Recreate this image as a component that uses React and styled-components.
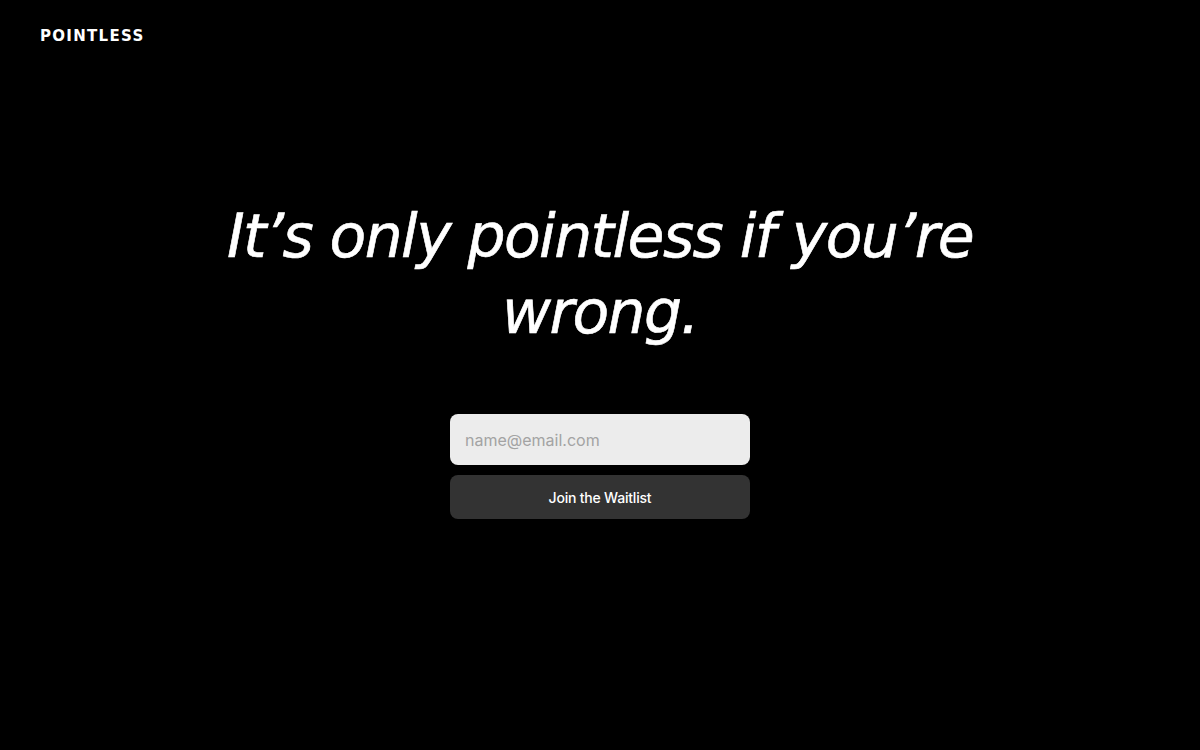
import React from 'react';
import styled, { createGlobalStyle } from 'styled-components';

const Global = createGlobalStyle`
  html, body {
    margin: 0;
    padding: 0;
    background: #000;
  }
  * { box-sizing: border-box; }
`;

const Page = styled.div`
  width: 1200px;
  height: 750px;
  background: #000;
  color: #fff;
  display: flex;
  flex-direction: column;
`;

const Header = styled.header`
  padding: 27px 40px 0;
  height: 60px;
`;

const Logo = styled.div`
  font-family: "DejaVu Sans", sans-serif;
  font-weight: 700;
  font-size: 15px;
  letter-spacing: 1.3px;
  line-height: 18px;
`;

const Main = styled.main`
  display: flex;
  flex-direction: column;
  align-items: center;
  padding-top: 138px;
`;

const Headline = styled.h1`
  margin: 0;
  width: 800px;
  text-align: center;
  font-family: "DejaVu Sans", sans-serif;
  font-style: italic;
  font-weight: 500;
  font-size: 60px;
  line-height: 76px;
  letter-spacing: -1.6px;
  -webkit-text-stroke: 0.6px #fff;
`;

const Form = styled.form`
  margin-top: 64px;
  width: 300px;
  display: flex;
  flex-direction: column;
  gap: 10px;
`;

const EmailInput = styled.input`
  height: 51px;
  border: none;
  border-radius: 8px;
  background: #ececec;
  padding: 0 15px;
  font-family: Inter, sans-serif;
  font-size: 16px;
  color: #222;
  outline: none;
  &::placeholder {
    color: #a3a3a3;
  }
`;

const SubmitButton = styled.button`
  height: 44px;
  border: none;
  border-radius: 8px;
  background: #333;
  color: #fff;
  font-family: Inter, sans-serif;
  font-weight: 500;
  font-size: 14px;
  letter-spacing: -0.2px;
  cursor: pointer;
`;

const App = () => {
  return (
    <Page>
      <Global />
      <Header>
        <Logo>POINTLESS</Logo>
      </Header>
      <Main>
        <Headline>It’s only pointless if you’re wrong.</Headline>
        <Form onSubmit={e => e.preventDefault()}>
          <EmailInput type="email" placeholder="name@email.com" />
          <SubmitButton type="submit">Join the Waitlist</SubmitButton>
        </Form>
      </Main>
    </Page>
  );
};

export default App;
